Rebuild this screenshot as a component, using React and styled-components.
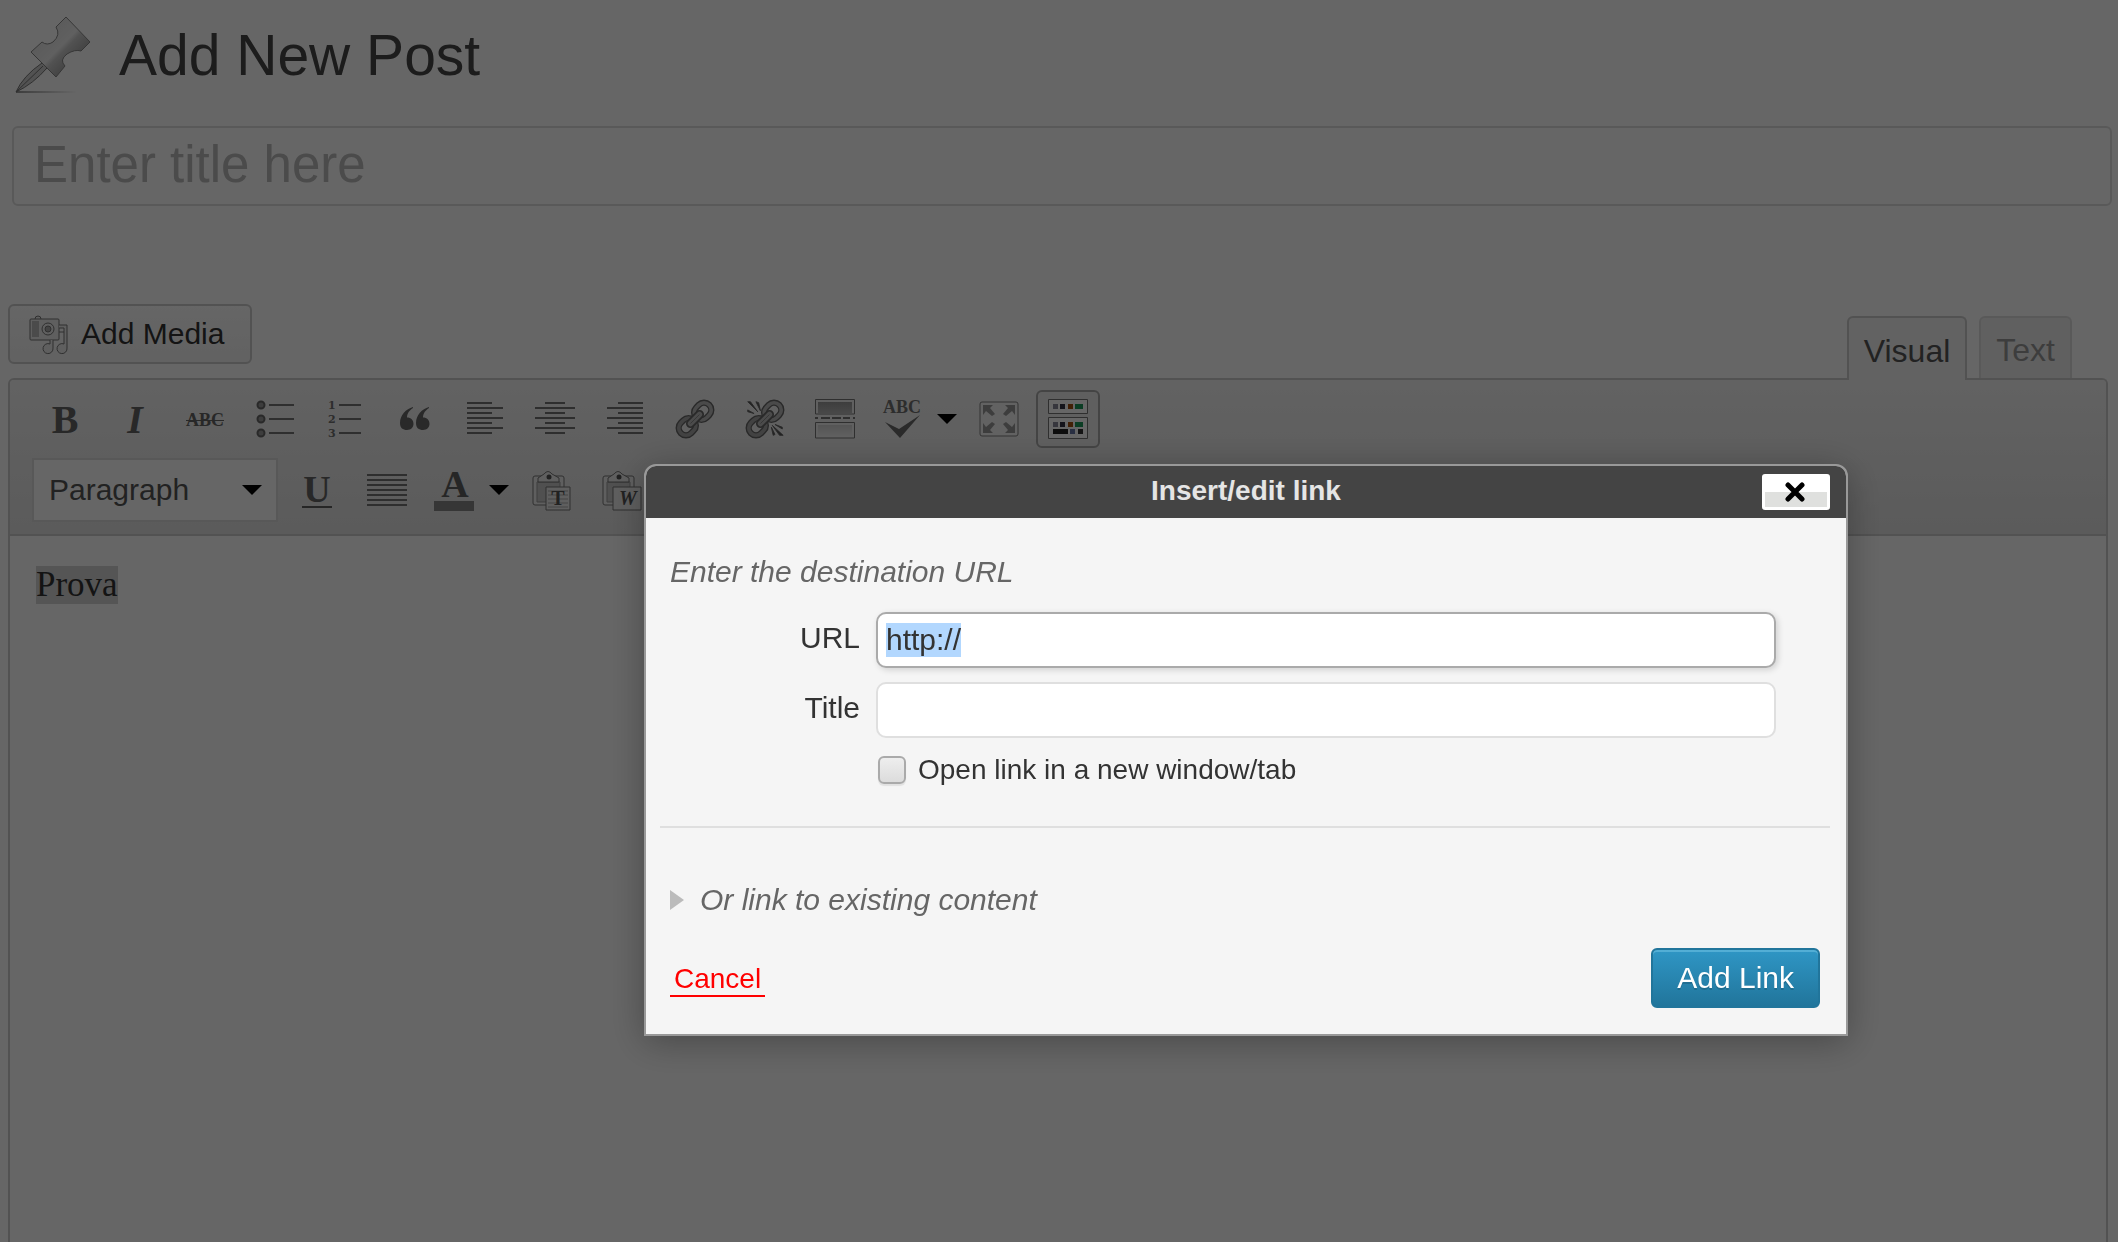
import React, { useEffect, useRef } from "react";
import styled, { createGlobalStyle } from "styled-components";

const GlobalStyle = createGlobalStyle`
  * {
    box-sizing: border-box;
  }
  body {
    margin: 0;
    background: #fff;
    color: #333;
    font-family: "Liberation Sans", Arial, sans-serif;
    font-size: 30px;
  }
  button, input, select {
    font-family: inherit;
  }
`;

const BulletIcon = () => (
  <Svg viewBox="0 0 40 40">
    {[6, 20, 34].map((y) => (
      <g key={y}>
        <circle cx="6" cy={y} r="3.5" fill="#999" stroke="#666" strokeWidth="2" />
        <path d={`M14 ${y}H39`} stroke="#777" strokeWidth="2" />
      </g>
    ))}
  </Svg>
);

const NumberIcon = () => (
  <Svg viewBox="0 0 40 40">
    {[6, 20, 34].map((y, i) => (
      <g key={y}>
        <text x="3" y={y + 4} fontFamily="DejaVu Serif, serif" fontSize="11" fontWeight="bold" fill="#707070">
          {i + 1}
        </text>
        <path d={`M14 ${y}H36`} stroke="#777" strokeWidth="2" />
      </g>
    ))}
  </Svg>
);

const QuoteIcon = () => (
  <Svg viewBox="0 0 40 40">
    {[0, 16].map((x) => (
      <path
        key={x}
        transform={`translate(${x} 0)`}
        d="M18 8C11 10 5 16 5 24C5 29 8 31 12 31C16 31 18.500 28 18.500 25C18.500 21 16 18.500 12 18.500C12 14 15 11 18 9Z"
        fill="#666"
      />
    ))}
  </Svg>
);

const LINES = {
  left: ["M2 4H27", "M2 9H38", "M2 14H27", "M2 19H38", "M2 24H27", "M2 29H38", "M2 34H27"],
  center: ["M10 4H30", "M0 9H40", "M10 14H30", "M0 19H40", "M10 24H30", "M0 29H40", "M10 34H30"],
  right: ["M13 4H38", "M2 9H38", "M13 14H38", "M2 19H38", "M13 24H38", "M2 29H38", "M13 34H38"],
  full: ["M0 5H40", "M0 10H40", "M0 15H40", "M0 20H40", "M0 25H40", "M0 30H40", "M0 35H40"],
};

const AlignIcon = ({ type }) => (
  <Svg viewBox="0 0 40 40">
    <path d={LINES[type].join("")} stroke="#747474" strokeWidth="2" />
  </Svg>
);

const Chain = () => (
  <g transform="rotate(-45 20 20)">
    <g fill="none">
      <rect x="-2" y="12" width="20" height="16" rx="8" stroke="#666" strokeWidth="7" />
      <rect x="-2" y="12" width="20" height="16" rx="8" stroke="#a6a6a6" strokeWidth="4" />
      <rect x="22" y="12" width="20" height="16" rx="8" stroke="#666" strokeWidth="7" />
      <rect x="22" y="12" width="20" height="16" rx="8" stroke="#b8b8b8" strokeWidth="4" />
    </g>
    <rect x="9" y="16" width="22" height="8" rx="4" fill="#bbb" stroke="#666" strokeWidth="2" />
    <path d="M13 20H27" stroke="#888" strokeWidth="1" />
  </g>
);

const LinkIcon = () => (
  <Svg viewBox="-2 -2 44 44">
    <Chain />
  </Svg>
);

const UnlinkIcon = () => (
  <Svg viewBox="-2 -2 44 44">
    <Chain />
    <path
      d="M10 1L15 11L13 2ZM1 1L12 12L4 1ZM1 10L8 14L1 12ZM27 29L31 37L29 38ZM28 27L40 38L36 38ZM31 26L39 29L39 31Z"
      fill="#555"
      stroke="#666"
    />
  </Svg>
);

const MoreIcon = () => (
  <Svg viewBox="0 0 40 40">
    <defs>
      <linearGradient id="more" x1="0" y1="0" x2="0" y2="1">
        <stop offset="0" stopColor="#999" />
        <stop offset="1" stopColor="#eee" />
      </linearGradient>
    </defs>
    <path d="M0.500 0.500H39.500V15H0.500Z M0.500 23.500H39.500V39H0.500Z" fill="#f0f0f0" stroke="#777" strokeWidth="1" />
    <path d="M3 3H37V14H3Z M3 26H37V37H3Z" fill="url(#more)" />
    <path d="M0 19H3M6 19H15M17 19H26M28 19H35M38 19H40" stroke="#777" strokeWidth="2" />
  </Svg>
);

const SpellIcon = () => (
  <Svg viewBox="0 0 40 40">
    <text x="1" y="14" fontFamily="Liberation Serif, serif" fontSize="18" fontWeight="bold" fill="#707070">
      ABC
    </text>
    <path d="M3 23L17 30L38 16L18 39Z" fill="#6a6a6a" />
  </Svg>
);

const FullscreenIcon = () => (
  <Svg viewBox="0 0 40 40">
    <rect x="1" y="3" width="38" height="34" rx="2" fill="#f4f4f4" stroke="#808080" strokeWidth="1" />
    <path
      d="M4 6H14L11 9L16 15L13 17L7 12L4 16ZM36 6H26L29 9L24 15L27 17L33 12L36 16ZM4 34H14L11 31L16 25L13 23L7 28L4 24ZM36 34H26L29 31L24 25L27 23L33 28L36 24Z"
      fill="#999"
    />
  </Svg>
);

const SinkIcon = () => (
  <Svg viewBox="0 0 40 40">
    <path d="M0.500 0.500H39.500V14.500H0.500Z M0.500 18.500H39.500V39.500H0.500Z" fill="#fff" stroke="#777" strokeWidth="1" />
    {[5, 23].map((y) => (
      <g key={y}>
        <path d={`M5 ${y}h5v5h-5z`} fill="#889" />
        <path d={`M12 ${y}h5v5h-5z`} fill="#334" />
        <path d={`M20 ${y}h5v5h-5z`} fill="#a5500f" />
        <path d={`M27 ${y}h8v5h-8z`} fill="#1d9a5b" />
      </g>
    ))}
    <path d="M5 30h15v5H5z" fill="#222" />
    <path d="M22 30h5v5h-5z" fill="#6677a5" />
    <path d="M30 30h5v5h-5z" fill="#333" />
  </Svg>
);

const ColorIcon = () => (
  <Svg viewBox="0 0 40 40">
    <text x="21" y="27" textAnchor="middle" fontFamily="Liberation Serif, serif" fontSize="38" fontWeight="bold" fill="#606060">
      A
    </text>
    <path d="M0 31H40V41H0Z" fill="#888" />
  </Svg>
);

const PasteIcon = ({ letter }) => (
  <Svg viewBox="0 0 40 40">
    <rect x="2" y="6" width="31" height="29" rx="2" fill="#eee" stroke="#777" strokeWidth="1" />
    <path d="M6 12H29V32H6Z" fill="#c8c8c8" stroke="#999" />
    <path d="M7 12V8L13 4Q17 -1 21 4L28 8V12Z" fill="#eee" stroke="#777" />
    <circle cx="18" cy="7" r="2.500" fill="#555" />
    <path d={letter === "W" ? "M12 17H40V40H12Z" : "M15 17H39V40H15Z"} fill="#eee" stroke="#777" />
    {letter === "T" && <path d="M17 21H37M17 25H37M17 29H37M17 33H37M17 37H37" stroke="#aaa" />}
    <text x="27" y="35" textAnchor="middle" fontFamily="Liberation Serif, serif" fontSize="20" fontWeight="bold" fontStyle={letter === "W" ? "italic" : "normal"} fill="#555">
      {letter}
    </text>
  </Svg>
);

const Caret = () => (
  <CaretSvg viewBox="0 0 20 10">
    <path d="M0 0H20L10 10Z" fill="#000" />
  </CaretSvg>
);

const PinIcon = () => (
  <PinSvg viewBox="0 0 76 78">
    <defs>
      <linearGradient id="pin" x1="0.2" y1="0.2" x2="0.8" y2="0.8">
        <stop offset="0" stopColor="#e0e0e0" />
        <stop offset="0.5" stopColor="#f0f0f0" />
        <stop offset="0.6" stopColor="#ccc" />
        <stop offset="1" stopColor="#999" />
      </linearGradient>
      <linearGradient id="ground" x1="0" y1="0" x2="1" y2="0">
        <stop offset="0" stopColor="#999" />
        <stop offset="1" stopColor="#fff" />
      </linearGradient>
    </defs>
    <path d="M1 75H62V77H1Z" fill="url(#ground)" />
    <path d="M27 47Q8 60 1 76Q18 68 32 52Z" fill="#ccc" stroke="#777" strokeWidth="1" />
    <path d="M28 50L1 76" stroke="#777" strokeWidth="1" />
    <path
      d="M51 1L75 26L66 35Q60 33 52 38Q44 44 50 50L41 61L16 36L27 26Q32 30 38 26Q46 19 41 11Z"
      fill="url(#pin)"
      stroke="#888"
      strokeWidth="1"
    />
  </PinSvg>
);

const MediaIcon = () => (
  <Svg viewBox="0 0 40 40">
    <g fill="#eee" stroke="#777" strokeWidth="1">
      <path d="M6 5Q6 2 9 2Q12 2 12 5" />
      <rect x="1" y="5" width="29" height="21" rx="1" />
      <path d="M3 7H10V23H3Z" fill="#bbb" stroke="none" />
      <circle cx="19" cy="15" r="6" />
      <circle cx="19" cy="15" r="3" fill="#aaa" />
      <path d="M30 11H38V34A5 5 0 1 1 35 30V14H30M30 18H35M24 26V34A5 5 0 1 1 21 30V26" />
    </g>
  </Svg>
);

const ROW_ONE = [
  ["Align left", <AlignIcon type="left" />],
  ["Align center", <AlignIcon type="center" />],
  ["Align right", <AlignIcon type="right" />],
  ["Insert link", <LinkIcon />],
  ["Unlink", <UnlinkIcon />],
  ["Insert more tag", <MoreIcon />],
];

const LinkDialog = () => {
  const urlRef = useRef(null);

  useEffect(() => {
    urlRef.current.focus();
    urlRef.current.select();
  }, []);

  return (
    <Overlay>
      <Dialog role="dialog" aria-labelledby="dialog-title">
        <DialogHead>
          <DialogTitle id="dialog-title">Insert/edit link</DialogTitle>
          <CloseButton type="button" aria-label="Close">
            <svg width="22" height="22" viewBox="0 0 22 22">
              <path d="M3 3L17 17M17 3L3 17" stroke="#000" strokeWidth="5" strokeLinecap="round" />
            </svg>
          </CloseButton>
        </DialogHead>
        <DialogForm>
          <Hint>Enter the destination URL</Hint>
          <Field>
            <FieldLabel htmlFor="url">URL</FieldLabel>
            <FieldInput id="url" type="text" ref={urlRef} defaultValue="http://" />
          </Field>
          <Field>
            <FieldLabel htmlFor="title">Title</FieldLabel>
            <FieldInput id="title" type="text" />
          </Field>
          <CheckLabel>
            <Checkbox type="checkbox" />
            Open link in a new window/tab
          </CheckLabel>
          <Divider />
          <Toggle type="button">
            <svg width="14" height="20" viewBox="0 0 14 20">
              <path d="M0 0L14 10L0 20Z" fill="#bbb" />
            </svg>
            Or link to existing content
          </Toggle>
          <Actions>
            <Cancel href="#">Cancel</Cancel>
            <Submit type="button">Add Link</Submit>
          </Actions>
        </DialogForm>
      </Dialog>
    </Overlay>
  );
};

const App = () => {
  return (
    <>
      <GlobalStyle />
      <Page>
        <Heading>
          <PinIcon />
          <h2>Add New Post</h2>
        </Heading>
        <TitleInput type="text" aria-label="Title" placeholder="Enter title here" />
        <EditorTools>
          <MediaButton type="button">
            <MediaIcon />
            Add Media
          </MediaButton>
          <Tabs>
            <Tab type="button" $active>Visual</Tab>
            <Tab type="button">Text</Tab>
          </Tabs>
        </EditorTools>
        <Editor>
          <Toolbar>
            <ToolRow>
              <Tool type="button" aria-label="Bold"><Glyph>B</Glyph></Tool>
              <Tool type="button" aria-label="Italic"><Glyph $italic>I</Glyph></Tool>
              <Tool type="button" aria-label="Strikethrough"><StrikeText>ABC</StrikeText></Tool>
              <Tool type="button" aria-label="Unordered list"><BulletIcon /></Tool>
              <Tool type="button" aria-label="Ordered list"><NumberIcon /></Tool>
              <Tool type="button" aria-label="Blockquote"><QuoteIcon /></Tool>
              {ROW_ONE.map(([name, icon]) => (
                <Tool key={name} type="button" aria-label={name}>{icon}</Tool>
              ))}
              <SplitTool type="button" aria-label="Spellcheck">
                <SpellIcon />
                <Caret />
              </SplitTool>
              <Tool type="button" aria-label="Fullscreen"><FullscreenIcon /></Tool>
              <Tool type="button" aria-label="Kitchen sink" $pressed><SinkIcon /></Tool>
            </ToolRow>
            <ToolRow>
              <FormatBox>
                <FormatSelect aria-label="Format">
                  <option>Paragraph</option>
                </FormatSelect>
                <Caret />
              </FormatBox>
              <Tool type="button" aria-label="Underline"><UnderlineText>U</UnderlineText></Tool>
              <Tool type="button" aria-label="Justify"><AlignIcon type="full" /></Tool>
              <SplitTool type="button" aria-label="Text color">
                <ColorIcon />
                <Caret />
              </SplitTool>
              <Tool type="button" aria-label="Paste as text"><PasteIcon letter="T" /></Tool>
              <Tool type="button" aria-label="Paste from Word"><PasteIcon letter="W" /></Tool>
            </ToolRow>
          </Toolbar>
          <Content>
            <Selected>Prova</Selected>
          </Content>
        </Editor>
      </Page>
      <LinkDialog />
    </>
  );
};

const Svg = styled.svg`
  width: 40px;
  height: 40px;
  flex: none;
  overflow: visible;
`;

const CaretSvg = styled.svg`
  width: 20px;
  height: 10px;
  flex: none;
`;

const PinSvg = styled.svg`
  width: 76px;
  height: 78px;
`;

const Glyph = styled.span`
  font-family: "Liberation Serif", serif;
  font-size: 40px;
  font-weight: bold;
  font-style: ${({ $italic }) => ($italic ? "italic" : "normal")};
`;

const StrikeText = styled.span`
  padding-top: 2px;
  font-family: "Liberation Serif", serif;
  font-size: 18px;
  font-weight: bold;
  text-decoration: line-through;
`;

const UnderlineText = styled.span`
  padding: 0 1px;
  border-bottom: 2px solid #606060;
  font-family: "Liberation Serif", serif;
  font-size: 38px;
  font-weight: bold;
  line-height: 34px;
`;

const Page = styled.main`
  display: flex;
  flex-direction: column;
  min-height: 100vh;
  padding: 16px 10px 0 8px;
`;

const Heading = styled.header`
  display: flex;
  align-items: center;
  gap: 28px;
  height: 78px;
  padding-left: 7px;

  h2 {
    margin: 0;
    font-size: 57px;
    font-weight: normal;
    line-height: 76px;
    color: #464646;
  }
`;

const TitleInput = styled.input`
  height: 80px;
  margin: 32px -4px 0 4px;
  padding: 0 20px 4px;
  border: 2px solid #dfdfdf;
  border-radius: 6px;
  background: #fff;
  font-size: 51px;

  &::placeholder {
    color: #bbb;
    opacity: 1;
  }
`;

const EditorTools = styled.div`
  display: flex;
  justify-content: space-between;
  align-items: flex-start;
  height: 74px;
  margin-top: 98px;
`;

const MediaButton = styled.button`
  display: flex;
  align-items: center;
  gap: 12px;
  height: 60px;
  padding: 0 26px 0 19px;
  border: 2px solid #ccc;
  border-radius: 6px;
  background: linear-gradient(#fefefe, #f4f4f4);
  color: #333;
  font-size: 30px;
`;

const Tabs = styled.div`
  display: flex;
  align-self: flex-end;
  gap: 12px;
  padding-right: 36px;
`;

const Tab = styled.button`
  position: relative;
  height: ${({ $active }) => ($active ? 64 : 62)}px;
  margin-bottom: ${({ $active }) => ($active ? -2 : 0)}px;
  padding: 4px 15px 0;
  border: 2px solid ${({ $active }) => ($active ? "#ccc" : "#dfdfdf")};
  border-bottom: 0;
  border-radius: 6px 6px 0 0;
  background: ${({ $active }) => ($active ? "#f5f5f5" : "#f1f1f1")};
  color: ${({ $active }) => ($active ? "#555" : "#999")};
  font-size: 32px;
`;

const Editor = styled.section`
  display: flex;
  flex: 1;
  flex-direction: column;
  border: 2px solid #ccc;
  border-bottom: 0;
  border-radius: 6px 6px 0 0;
`;

const Toolbar = styled.div`
  display: flex;
  flex-direction: column;
  gap: 10px;
  padding: 10px 20px 12px;
  border-bottom: 2px solid #ccc;
  border-radius: 4px 4px 0 0;
  background: linear-gradient(#f5f5f5, #e3e3e3);
`;

const ToolRow = styled.div`
  display: flex;
  align-items: center;
`;

const Tool = styled.button`
  display: flex;
  justify-content: center;
  align-items: center;
  width: ${({ $pressed }) => ($pressed ? 64 : 70)}px;
  height: 58px;
  margin: ${({ $pressed }) => ($pressed ? "0 2px" : "0")};
  padding: 0;
  border: 2px solid ${({ $pressed }) => ($pressed ? "#aaa" : "transparent")};
  border-radius: 6px;
  background: ${({ $pressed }) => ($pressed ? "#eee" : "none")};
  color: #646464;
`;

const SplitTool = styled.button`
  display: flex;
  align-items: center;
  gap: 15px;
  width: 94px;
  height: 58px;
  padding: 0 0 0 12px;
  border: 0;
  background: none;
`;

const FormatBox = styled.div`
  display: flex;
  align-items: center;
  width: 246px;
  height: 64px;
  margin: 0 4px 0 2px;
  padding-right: 14px;
  border: 2px solid #ddd;
  background: #fff;
`;

const FormatSelect = styled.select`
  flex: 1;
  height: 60px;
  padding: 0 0 2px 15px;
  border: 0;
  appearance: none;
  background: none;
  color: #555;
  font-size: 30px;
`;

const Content = styled.div`
  flex: 1;
  padding: 30px 26px;
  font-family: "Liberation Serif", serif;
  font-size: 35px;
  line-height: 38px;
`;

const Selected = styled.span`
  display: inline-block;
  background: #d4d4d4;
`;

const Overlay = styled.div`
  position: fixed;
  inset: 0;
  display: flex;
  justify-content: flex-end;
  align-items: flex-start;
  padding: 464px 270px 0;
  background: rgba(0, 0, 0, 0.6);
`;

const Dialog = styled.div`
  width: 100%;
  max-width: 1204px;
  border: 2px solid #999;
  border-radius: 12px 12px 0 0;
  background: #f5f5f5;
  box-shadow: 0 6px 36px rgba(0, 0, 0, 0.3);
`;

const DialogHead = styled.div`
  display: grid;
  grid-template-columns: 1fr auto 1fr;
  align-items: center;
  height: 52px;
  padding: 0 16px;
  border-radius: 10px 10px 0 0;
  background: #444;
`;

const DialogTitle = styled.h1`
  grid-column: 2;
  margin: 0;
  padding-bottom: 2px;
  color: #e5e5e5;
  font-size: 28px;
  line-height: 50px;
`;

const CloseButton = styled.button`
  display: flex;
  justify-content: center;
  align-items: center;
  justify-self: end;
  width: 68px;
  height: 36px;
  padding: 2px 0 0;
  border: 3px solid #fff;
  border-radius: 3px;
  background: linear-gradient(#fff 50%, #dfe0de 50%);
`;

const DialogForm = styled.form`
  display: flex;
  flex-direction: column;
  padding: 36px 26px 26px 24px;
`;

const Hint = styled.p`
  margin: 0 0 22px;
  color: #666;
  font-style: italic;
  line-height: 36px;
`;

const Field = styled.div`
  display: flex;
  align-items: center;
  gap: 16px;
  margin-bottom: 14px;
  padding-right: 44px;
`;

const FieldLabel = styled.label`
  width: 190px;
  padding-bottom: 4px;
  text-align: right;
`;

const FieldInput = styled.input`
  flex: 1;
  height: 56px;
  padding: 0 8px;
  border: 2px solid #dfdfdf;
  border-radius: 10px;
  outline: 0;
  background: #fff;
  color: #333;
  font-size: 30px;

  &:focus {
    border-color: #aaa;
    box-shadow: 2px 2px 6px rgba(0, 0, 0, 0.15);
  }
  &::selection {
    background: #b2d7fe;
    color: #333;
  }
`;

const CheckLabel = styled.label`
  display: flex;
  align-items: center;
  gap: 12px;
  margin-left: 208px;
  font-size: 28px;
  line-height: 36px;
`;

const Checkbox = styled.input`
  width: 28px;
  height: 28px;
  margin: 0;
  border: 2px solid #aaa;
  border-radius: 6px;
  appearance: none;
  background: linear-gradient(#eee, #dcdcdc);
  box-shadow: 0 2px 1px rgba(0, 0, 0, 0.08);
`;

const Divider = styled.hr`
  align-self: stretch;
  height: 2px;
  margin: 38px -10px 54px;
  border: 0;
  background: #dfdfdf;
`;

const Toggle = styled.button`
  display: flex;
  align-items: center;
  align-self: flex-start;
  gap: 16px;
  padding: 0;
  border: 0;
  background: none;
  color: #666;
  font-size: 30px;
  font-style: italic;
  line-height: 36px;
`;

const Actions = styled.div`
  display: flex;
  justify-content: space-between;
  align-items: center;
  margin-top: 30px;
`;

const Cancel = styled.a`
  padding: 4px 4px 0;
  border-bottom: 2px solid #f00;
  color: #f00;
  font-size: 28px;
  line-height: 32px;
  text-decoration: none;
`;

const Submit = styled.button`
  height: 60px;
  padding: 0 24px;
  border: 2px solid #21759b;
  border-radius: 6px;
  background: linear-gradient(#2f96c5, #21759b);
  box-shadow: inset 0 2px 0 rgba(120, 200, 230, 0.5);
  color: #fff;
  font-size: 30px;
  text-shadow: 0 2px 0 rgba(0, 0, 0, 0.15);
`;

export default App;
